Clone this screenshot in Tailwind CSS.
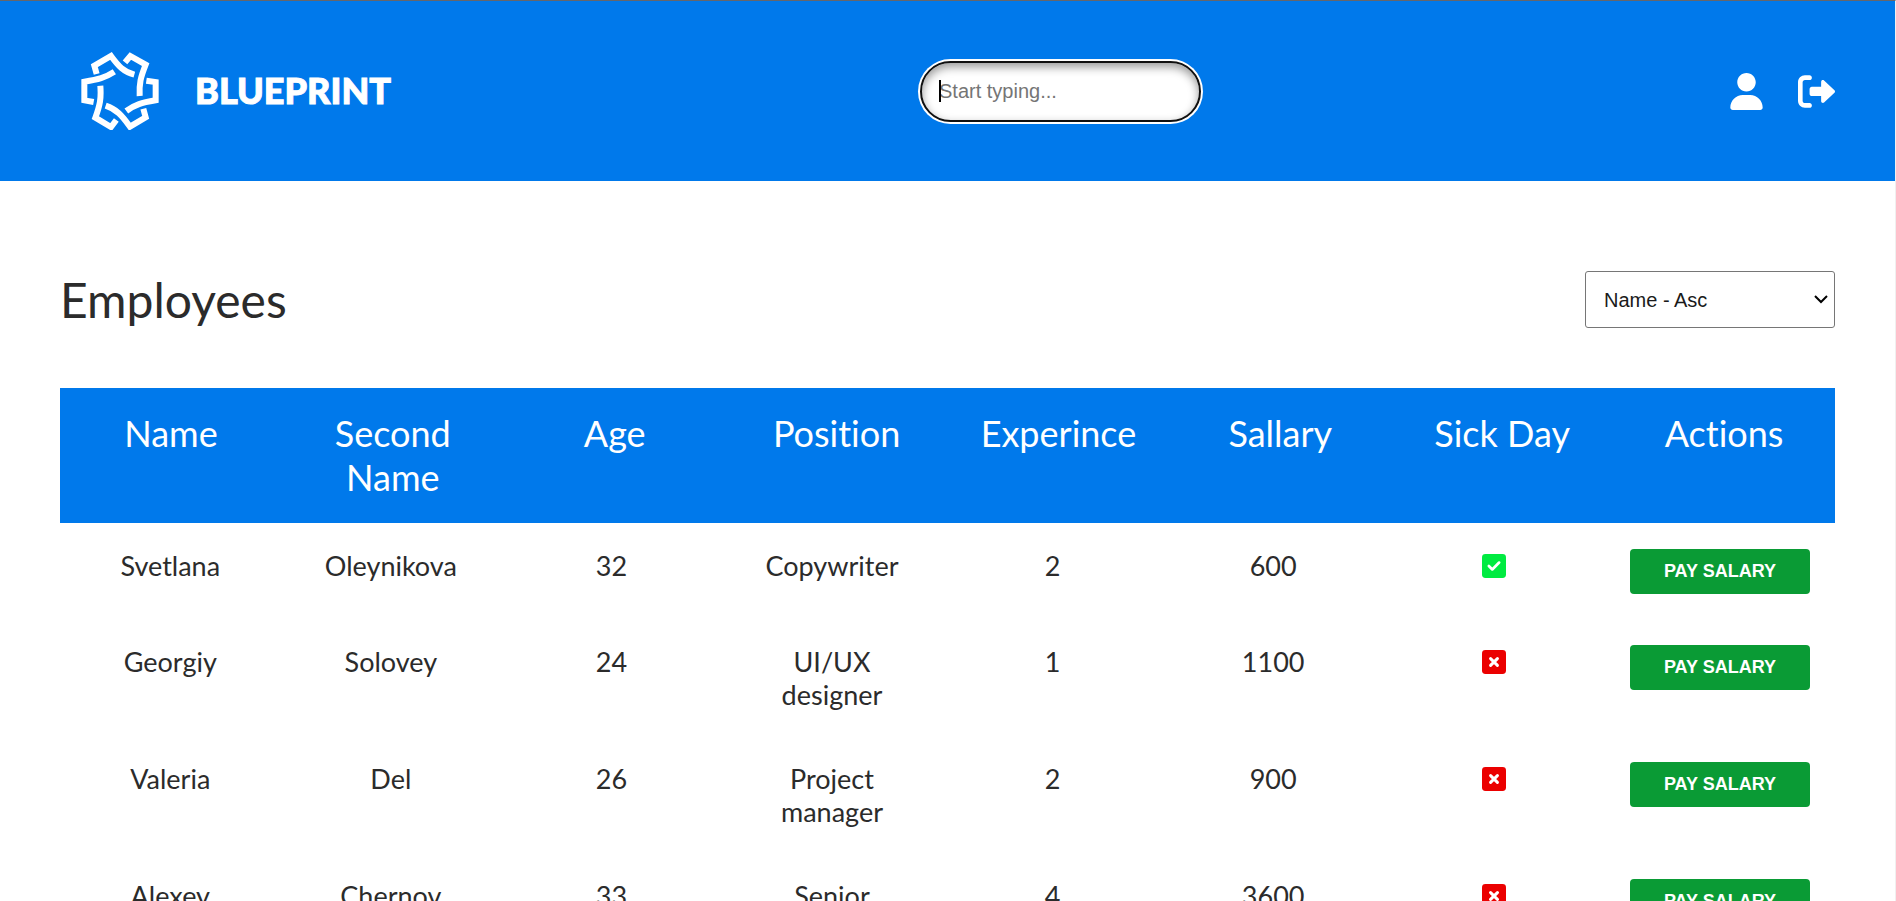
<!DOCTYPE html>
<html lang="en">
<head>
<meta charset="utf-8">
<title>Blueprint</title>
<script src="https://cdn.jsdelivr.net/npm/@tailwindcss/browser@4"></script>
</head>
<body class="h-screen overflow-hidden border-t border-r border-t-[#66666b] border-r-[#f0f0f0] bg-white font-['Lato',sans-serif] text-[#2b2b2b] [font-variant-ligatures:none]">
<svg class="hidden">
  <symbol id="check" viewBox="0 0 448 448"><rect width="448" height="448" rx="64" fill="#00eb41"/><path d="M128 224l64 64 128-128" fill="none" stroke="#fff" stroke-width="50" stroke-linecap="round" stroke-linejoin="round"/></symbol>
  <symbol id="cross" viewBox="0 0 448 448"><rect width="448" height="448" rx="64" fill="#eb0000"/><path d="M160 160l128 128M288 160l-128 128" fill="none" stroke="#fff" stroke-width="56" stroke-linecap="round"/></symbol>
</svg>
<header class="flex items-center justify-between bg-[#0079eb] px-15 py-[49px] text-white">
  <a href="#" class="flex items-center gap-[35px] pb-0.5 pl-5">
    <svg class="size-20" viewBox="30 30 240 240" fill="none" stroke="#fff" stroke-width="18">
      <path d="M80 102L73 77L123 48C145 78 160 95 193 104"/>
      <path d="M165 67L181 48L227 74C212 112 207 130 209 168"/>
      <path d="M229 122L257 126V181C215 188 195 193 169 213"/>
      <path d="M220 206L227 232L180 260C155 225 140 208 107 197"/>
      <path d="M139 240L123 261L76 233C90 195 94 175 91 137"/>
      <path d="M71 186L43 181V125C85 118 105 113 133 95"/>
    </svg>
    <span class="text-4xl font-black [-webkit-text-stroke:1px_white]">BLUEPRINT</span>
  </a>
  <div class="relative">
    <input type="text" aria-label="Search" placeholder="Start typing..." class="block h-[61px] w-[281px] rounded-full border-2 border-[#101010] bg-white px-[17px] font-['Liberation_Sans',sans-serif] text-xl text-black shadow-[inset_0_4px_10px_rgba(0,0,0,0.4)] ring-2 ring-white outline-none placeholder:text-[#757575]">
    <span class="absolute top-[19px] left-[19px] h-[22px] w-0.5 bg-black"></span>
  </div>
  <nav class="flex items-center gap-[35px]">
    <a href="#" aria-label="Profile"><svg class="h-[37px] w-[33px] fill-white" viewBox="0 0 448 512"><path d="M224 256c70.7 0 128-57.31 128-128S294.7 0 224 0 96 57.3 96 128s57.3 128 128 128zm50.7 48H173.3C77.61 304 0 381.6 0 477.3c0 19.14 15.52 34.67 34.66 34.67h378.7C432.5 512 448 496.5 448 477.3 448 381.6 370.4 304 274.7 304z"/></svg></a>
    <a href="#" aria-label="Log out"><svg class="size-[37px] fill-white" viewBox="0 0 512 512"><path d="M96 480h64c17.67 0 32-14.33 32-32s-14.33-32-32-32H96c-17.67 0-32-14.33-32-32V128c0-17.67 14.33-32 32-32h64c17.67 0 32-14.33 32-32s-14.33-32-32-32H96C42.98 32 0 74.98 0 128v256C0 437 42.98 480 96 480zM504.8 238.5l-144.1-136c-6.975-6.578-17.2-8.375-26-4.594c-8.803 3.797-14.51 12.47-14.51 22.05l-.0918 72l-128-.001c-17.69 0-32.02 14.33-32.02 32v64c0 17.67 14.34 32 32.02 32l128 .001l.0918 71.1c0 9.578 5.707 18.25 14.51 22.05c8.803 3.781 19.03 1.984 26-4.594l144.1-136C514.4 264.4 514.4 247.6 504.8 238.5z"/></svg></a>
  </nav>
</header>
<main class="px-15 pt-[90px]">
  <div class="mb-15 flex items-center justify-between">
    <h1 class="text-5xl">Employees</h1>
    <div class="relative">
      <select aria-label="Sort order" class="h-[57px] w-[250px] appearance-none rounded-[3px] border border-[#767676] bg-white px-[18px] font-['Liberation_Sans',sans-serif] text-xl text-[#1a1a1a]"><option>Name - Asc</option><option>Name - Desc</option></select>
      <svg class="pointer-events-none absolute top-6 right-[7px] h-[9px] w-[14px]" viewBox="0 0 14 9" fill="none" stroke="#000" stroke-width="2"><path d="M1 1l6 6 6-6"/></svg>
    </div>
  </div>
  <table class="block w-full text-center">
    <thead class="block bg-[#0079eb] text-4xl/[44px] text-white">
      <tr class="grid grid-cols-8 pt-[23px] pb-6 *:px-6 *:font-normal">
        <th scope="col">Name</th><th scope="col">Second Name</th><th scope="col">Age</th><th scope="col">Position</th><th scope="col">Experince</th><th scope="col">Sallary</th><th scope="col">Sick Day</th><th scope="col">Actions</th>
      </tr>
    </thead>
    <tbody id="rows" class="block text-[27px]/[33px]"></tbody>
  </table>
</main>
<script>
const employees = [
  ['Svetlana', 'Oleynikova', 32, 'Copywriter', 2, 600, true],
  ['Georgiy', 'Solovey', 24, 'UI/UX designer', 1, 1100, false],
  ['Valeria', 'Del', 26, 'Project manager', 2, 900, false],
  ['Alexey', 'Chernov', 33, 'Senior developer', 4, 3600, false],
];
document.getElementById('rows').innerHTML = employees.map(e => `
  <tr class="grid grid-cols-[repeat(7,minmax(0,1fr))_231px] items-start pt-[26px] pb-[25px]">
    ${e.slice(0, 6).map(v => `<td class="px-9">${v}</td>`).join('')}
    <td class="flex justify-center pt-[5px]"><svg class="size-6" role="img" aria-label="${e[6] ? 'Yes' : 'No'}"><use href="#${e[6] ? 'check' : 'cross'}"/></svg></td>
    <td class="flex justify-end pr-[25px]"><button type="button" class="h-[45px] w-[180px] rounded bg-[#0a9b35] pb-0.5 font-['Liberation_Sans',sans-serif] text-lg font-bold text-white">PAY SALARY</button></td>
  </tr>`).join('');
</script>
</body>
</html>
